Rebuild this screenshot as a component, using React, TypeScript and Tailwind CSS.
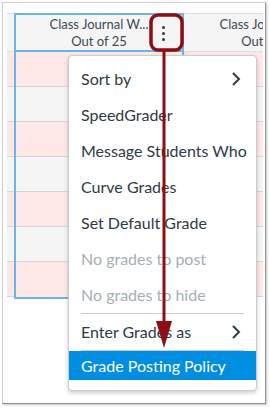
const rows = [0, 1, 2, 3, 4, 5, 6];

function Chevron() {
  return (
    <svg width="10" height="16" viewBox="0 0 10 16" className="shrink-0">
      <path d="M2 2 L8 8 L2 14" fill="none" stroke="#2d3b45" strokeWidth="2" />
    </svg>
  );
}

function Item({
  label,
  muted,
  sub,
}: {
  label: string;
  muted?: boolean;
  sub?: boolean;
}) {
  return (
    <div
      className={`h-[36px] flex items-center justify-between pl-[12px] pr-[15px] whitespace-nowrap ${
        muted ? "text-[#a5afb5]" : "text-[#2d3b45]"
      }`}
    >
      <span>{label}</span>
      {sub && <Chevron />}
    </div>
  );
}

export default function App() {
  return (
    <div
      className="w-[270px] h-[408px] bg-white relative overflow-hidden"
      style={{ fontFamily: "Lato, 'Noto Sans', sans-serif" }}
    >
      <div className="ml-[2px] mt-[2px] w-[264px] h-[402px] border border-[#cfcfcf] border-r-[#9a9a9a] border-b-[#8f8f8f] shadow-[1px_1px_2px_rgba(0,0,0,0.25)] bg-white pl-[4px] pt-[10px] overflow-hidden">
        <div className="flex w-[256px] overflow-hidden">
          {/* partial column on the left */}
          <div className="w-[7px] shrink-0">
            <div className="h-[39px] bg-[#f5f5f5] border-t border-b border-[#dcdfe1]" />
            {rows.map((r) => (
              <div
                key={r}
                className={`h-[35px] border-b border-[#d3d6d9] ${
                  r % 2 === 0 ? "bg-[#ffe8e5]" : "bg-[#f5f5f5]"
                }`}
              />
            ))}
          </div>
          {/* selected column */}
          <div className="w-[170px] shrink-0 border-x-2 border-[#6eb4ea] border-b-2">
            <div className="h-[39px] bg-[#f5f5f5] border-t-2 border-b-2 border-[#6eb4ea] flex items-center">
              <div className="flex-1 text-center text-[13px] leading-[17px] text-[#3b4a55] whitespace-nowrap">
                <div>Class Journal W...</div>
                <div>Out of 25</div>
              </div>
              <div className="absolute left-[162px] top-[26px] flex flex-col gap-[3px]">
                <span className="w-[3px] h-[3px] rounded-full bg-[#2d3b45]" />
                <span className="w-[3px] h-[3px] rounded-full bg-[#2d3b45]" />
                <span className="w-[3px] h-[3px] rounded-full bg-[#2d3b45]" />
              </div>
            </div>
            {rows.map((r) => (
              <div
                key={r}
                className={`h-[35px] border-b border-[#d3d6d9] last:border-b-0 ${
                  r % 2 === 0 ? "bg-[#ffe8e5]" : "bg-[#f5f5f5]"
                }`}
              />
            ))}
          </div>
          {/* next column, cut off by the frame */}
          <div className="w-[170px] shrink-0">
            <div className="h-[39px] bg-[#f5f5f5] border-t border-b border-[#dcdfe1] flex items-center">
              <div className="flex-1 text-center text-[13px] leading-[17px] text-[#3b4a55] whitespace-nowrap">
                <div>Class Journal W...</div>
                <div>Out of 25</div>
              </div>
            </div>
            {rows.map((r) => (
              <div
                key={r}
                className={`h-[35px] border-b border-[#d3d6d9] border-l-[3px] border-l-[#fde3d6] ${
                  r % 2 === 0 ? "bg-[#ffe8e5]" : "bg-[#f5f5f5]"
                }`}
              />
            ))}
          </div>
        </div>
      </div>

      {/* menu */}
      <div className="absolute left-[68px] top-[55px] w-[189px] bg-white border border-[#c7cdd1] rounded-[4px] shadow-[0_2px_4px_rgba(0,0,0,0.2)] pt-[5px] pb-[10px] text-[16px]">
        <Item label="Sort by" sub />
        <Item label="SpeedGrader" />
        <Item label="Message Students Who" />
        <Item label="Curve Grades" />
        <Item label="Set Default Grade" />
        <Item label="No grades to post" muted />
        <Item label="No grades to hide" muted />
        <div className="mx-[12px] border-t border-[#c7cdd1]" />
        <Item label="Enter Grades as" sub />
        <div className="mx-[12px] border-t border-[#c7cdd1]" />
        <div className="h-[29px] flex items-center pl-[12px] bg-[#008ee2] text-white whitespace-nowrap">
          Grade Posting Policy
        </div>
      </div>

      {/* annotation */}
      <svg
        className="absolute left-0 top-0 pointer-events-none"
        width="270"
        height="408"
        viewBox="0 0 270 408"
      >
        <rect
          x="151"
          y="15"
          width="31"
          height="35"
          rx="7"
          fill="none"
          stroke="#8e0f13"
          strokeWidth="3.5"
        />
        <line x1="164" y1="51" x2="164" y2="325" stroke="#8e0f13" strokeWidth="3" />
        <polygon points="156,321 172,321 164,348" fill="#8e0f13" />
      </svg>
    </div>
  );
}
